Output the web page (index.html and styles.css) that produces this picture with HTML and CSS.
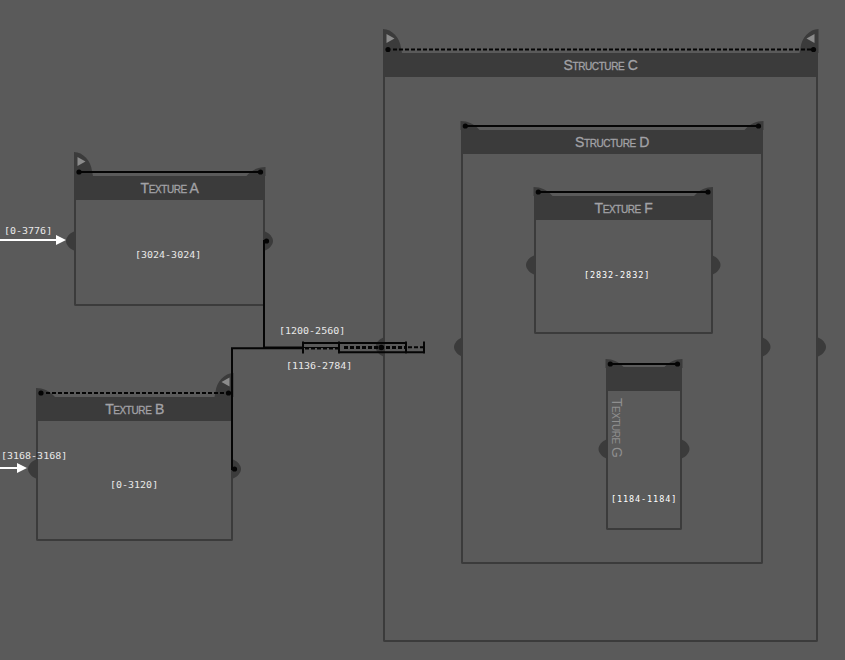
FILE: index.html
```html
<!DOCTYPE html>
<html lang="en">
<head>
<meta charset="utf-8">
<title>Texture pipeline</title>
<link rel="stylesheet" href="styles.css">
</head>
<body>
<main class="canvas">
  <section class="node node-c"><h2 class="title">Structure C</h2></section>
  <section class="node node-d"><h2 class="title">Structure D</h2></section>
  <section class="node node-a"><h2 class="title">Texture A</h2></section>
  <section class="node node-b"><h2 class="title">Texture B</h2></section>
  <section class="node node-f"><h2 class="title">Texture F</h2></section>
  <section class="node node-g"><div class="title"></div><h2 class="side-title">Texture G</h2></section>

  <svg class="wires" width="845" height="660" viewBox="0 0 845 660">
    <defs>
      <path id="tall" d="M0 0C9 0 17 9 18 19L19 24H0Z"/>
      <path id="low" d="M0 0C7 0 14 3 19 9H0Z"/>
      <path id="port" d="M0-9.5C4-8 8-4 8 0S4 8 0 9.5Z"/>
    </defs>
    <g class="shade">
      <use href="#tall" transform="translate(74 152)"/>
      <use href="#low" transform="translate(265.500 167) scale(-1 1)"/>
      <use href="#low" transform="translate(36 388)"/>
      <use href="#tall" transform="translate(233.500 373) scale(-1 1)"/>
      <use href="#tall" transform="translate(383 29)"/>
      <use href="#tall" transform="translate(818.500 29) scale(-1 1)"/>
      <use href="#low" transform="translate(460.500 121)"/>
      <use href="#low" transform="translate(763.500 121) scale(-1 1)"/>
      <use href="#low" transform="translate(533.500 187)"/>
      <use href="#low" transform="translate(713 187) scale(-1 1)"/>
      <use href="#low" transform="translate(605.500 359)"/>
      <use href="#low" transform="translate(682.500 359) scale(-1 1)"/>
      <use href="#port" transform="translate(74 241) scale(-1 1)"/>
      <use href="#port" transform="translate(265 241)"/>
      <use href="#port" transform="translate(36 469) scale(-1 1)"/>
      <use href="#port" transform="translate(233 469)"/>
      <use href="#port" transform="translate(383.500 347) scale(-1 1)"/>
      <use href="#port" transform="translate(818 347)"/>
      <use href="#port" transform="translate(462 347) scale(-1 1)"/>
      <use href="#port" transform="translate(762.500 347)"/>
      <use href="#port" transform="translate(534 265) scale(-1 1)"/>
      <use href="#port" transform="translate(712.500 265)"/>
      <use href="#port" transform="translate(606.500 449) scale(-1 1)"/>
      <use href="#port" transform="translate(681.500 449)"/>
    </g>
    <path class="play" d="M77.500 157v9l8-4.500ZM229.500 377.500v9l-8-4.500ZM386.500 34v9l8-4.500ZM814.500 34v9l-8-4.500Z"/>
    <g class="line">
      <path d="M79 172H261M465 126H759M538 192H708M610 364H678"/>
      <path class="dash" d="M46 393H229"/>
      <path class="dash" d="M393 49.500H814"/>
      <path d="M267 241H264V347.500H303"/>
      <path d="M235 469H232V348.200H303"/>
      <path class="thin" d="M303 347.500H339"/>
      <path d="M303 343H406M339 352.300H424M303 341.500V353.500M339 341.500V353.500M406 341.500V353.500M424 341.500V353.500"/>
      <path class="dash heavy" d="M344 347.500H406"/>
      <path class="dash" d="M408 347.200H424"/>
      <path class="dash" d="M305 348.500H339"/>
    </g>
    <g class="dots">
      <circle cx="79" cy="172" r="2.600"/><circle cx="260.500" cy="172" r="2.600"/>
      <circle cx="41" cy="393" r="2.600"/><circle cx="228.500" cy="393" r="2.600"/>
      <circle cx="388" cy="49.500" r="2.600"/><circle cx="813.500" cy="49.500" r="2.600"/>
      <circle cx="465.300" cy="126" r="2.600"/><circle cx="758.500" cy="126" r="2.600"/>
      <circle cx="538.300" cy="192" r="2.600"/><circle cx="708" cy="192" r="2.600"/>
      <circle cx="610.300" cy="364" r="2.600"/><circle cx="677.500" cy="364" r="2.600"/>
      <circle cx="266.500" cy="241" r="2.600"/><circle cx="234.500" cy="469" r="2.600"/>
      <circle cx="381.300" cy="347.500" r="2.800"/>
    </g>
    <path class="arrows" d="M0 239H56V235L66 240L56 245V241H0ZM0 467H17V463L27 468L17 473V469H0Z"/>
  </svg>

  <span class="label in-a">[0-3776]</span>
  <span class="label in-b">[3168-3168]</span>
  <span class="label range-a">[3024-3024]</span>
  <span class="label range-b">[0-3120]</span>
  <span class="label wire-a">[1200-2560]</span>
  <span class="label wire-b">[1136-2784]</span>
  <span class="label compact range-f">[2832-2832]</span>
  <span class="label compact range-g">[1184-1184]</span>
</main>
</body>
</html>
```

FILE: styles.css
```css
* { box-sizing: border-box; }
body { margin: 0; background: #5a5a5a; }

.canvas {
  position: relative;
  width: 845px;
  height: 660px;
  overflow: hidden;
  font-family: "Liberation Sans", Arial, sans-serif;
}

.node {
  position: absolute;
  border: 2px solid #3b3b3b;
  border-top: 0;
  border-radius: 0 0 2px 2px;
}
.node-a { left: 74px; top: 176px; width: 191px; height: 130px; }
.node-b { left: 36px; top: 397px; width: 197px; height: 144px; }
.node-c { left: 383px; top: 53px; width: 435px; height: 589px; }
.node-d { left: 461px; top: 130px; width: 302px; height: 434px; }
.node-f { left: 534px; top: 196px; width: 179px; height: 138px; }
.node-g { left: 606px; top: 367px; width: 76px; height: 163px; }

.title {
  height: 24px;
  margin: 0;
  background: #3b3b3b;
  color: #a2a2a6;
  font-size: 14px;
  font-weight: 400;
  font-variant: small-caps;
  letter-spacing: -0.4px;
  line-height: 24px;
  text-align: center;
  -webkit-text-stroke: 0.3px #a2a2a6;
}
.side-title {
  margin: 7px 0 0 1px;
  color: #8f8f8f;
  font-size: 14px;
  font-weight: 400;
  font-variant: small-caps;
  letter-spacing: -0.5px;
  line-height: 16px;
  writing-mode: vertical-rl;
}

.wires { position: absolute; left: 0; top: 0; }
.shade { fill: #3b3b3b; }
.play { fill: #8b8b8b; }
.line { fill: none; stroke: #050505; stroke-width: 2; }
.dash { stroke-dasharray: 4 2; }
.heavy { stroke-width: 3; }
.thin { stroke-width: 1; }
.dots { fill: #050505; }
.arrows { fill: #fff; }

.label {
  position: absolute;
  color: #e8e8e8;
  font: 10px/12px "DejaVu Sans Mono", monospace;
  white-space: nowrap;
  transform: scaleY(0.9);
}
.compact {
  font: 8.5px/12px "DejaVu Sans Mono", monospace;
  letter-spacing: 0.9px;
  color: #fff;
  transform: none;
}
.in-a { left: 4px; top: 225px; }
.in-b { left: 1px; top: 450px; }
.range-a { left: 135px; top: 249px; }
.range-b { left: 110px; top: 479px; }
.wire-a { left: 279px; top: 325px; }
.wire-b { left: 286px; top: 360px; }
.range-f { left: 584px; top: 269px; }
.range-g { left: 611px; top: 493px; }
```
